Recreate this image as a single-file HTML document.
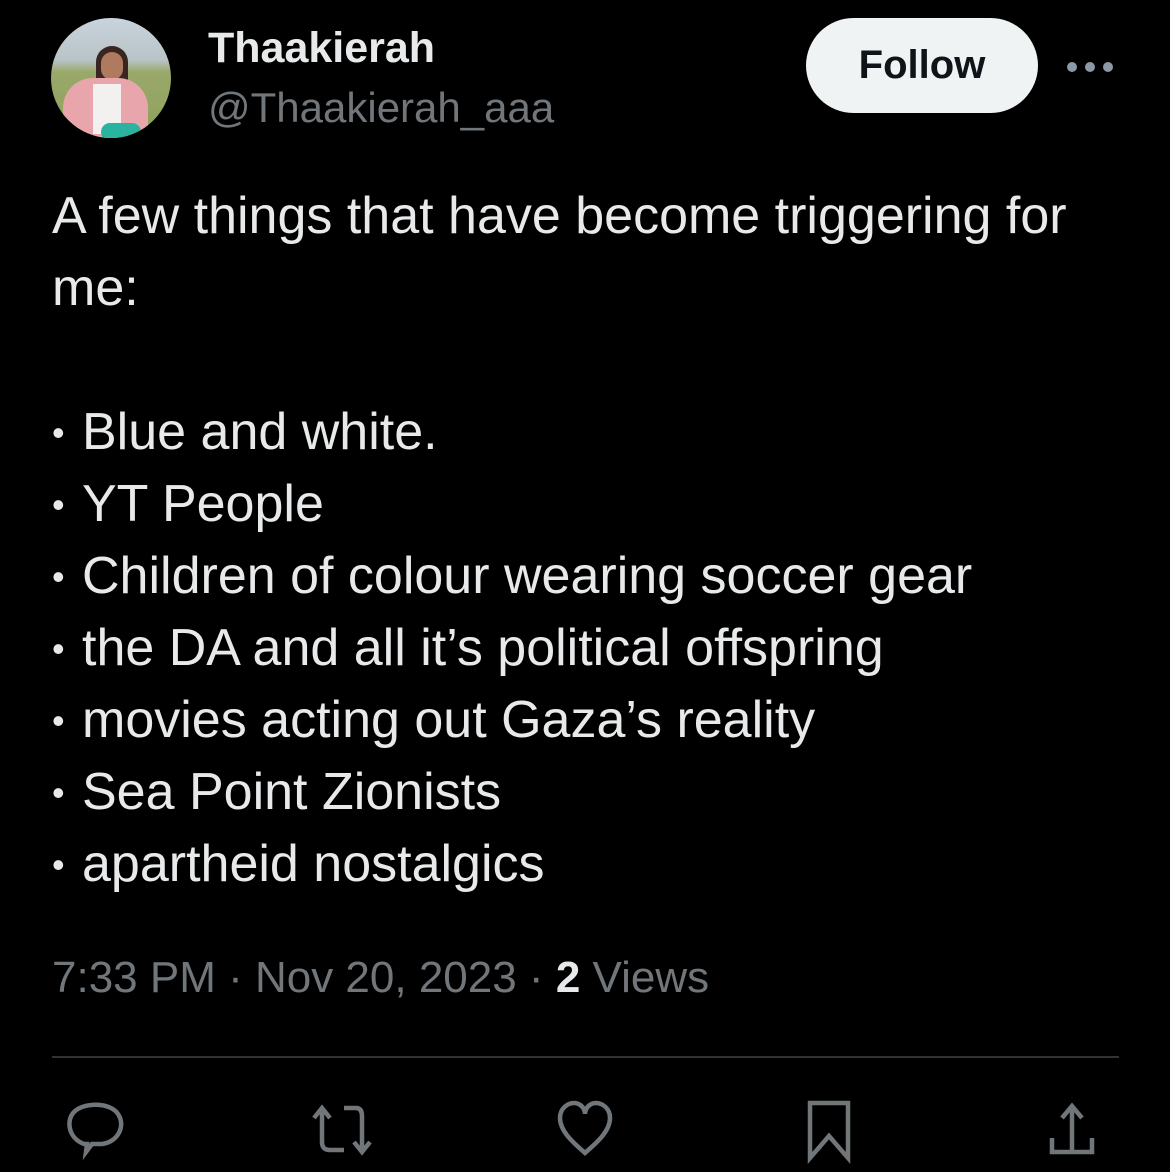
<!DOCTYPE html>
<html><head><style>
body{margin:0;width:1170px;height:1172px;background:#000;overflow:hidden;font-family:"Liberation Sans",sans-serif;color:#e7e9ea;position:relative}
.a{position:absolute;white-space:nowrap}
.av{left:51px;top:18px;width:120px;height:120px;border-radius:50%;background:linear-gradient(#c9d3dc 0%,#b9c4c8 35%,#9aa86a 45%,#8da35a 100%);overflow:hidden}
.body{left:52px;font-size:52px;line-height:72px}
.l{height:72px}
.b{display:inline-block;width:30px;font-size:36px;line-height:10px;vertical-align:4px}
.g{color:#71767b}
</style></head><body>
<div class="a av">
<div style="position:absolute;left:45px;top:28px;width:32px;height:50px;background:#3a2620;border-radius:16px 16px 6px 6px"></div>
<div style="position:absolute;left:50px;top:34px;width:22px;height:28px;background:#b07a5e;border-radius:11px"></div>
<div style="position:absolute;left:12px;top:60px;width:85px;height:60px;background:#e8a6ac;border-radius:30px 30px 0 0"></div>
<div style="position:absolute;left:42px;top:66px;width:28px;height:50px;background:#f3f0f0"></div>
<div style="position:absolute;left:50px;top:105px;width:40px;height:18px;background:#2bb3a0;border-radius:10px"></div>
</div>
<div class="a" style="left:208px;top:24px;font-size:43px;font-weight:bold">Thaakierah</div>
<div class="a g" style="left:208px;top:84px;font-size:42px">@Thaakierah_aaa</div>
<div class="a" style="left:806px;top:18px;width:232px;height:95px;border-radius:48px;background:#eff3f4;color:#0f1419;font-size:40px;font-weight:bold;text-align:center;line-height:95px">Follow</div>
<svg class="a" style="left:1066px;top:60px" width="48" height="14" fill="#8b98a5"><circle cx="6" cy="7" r="5"/><circle cx="24" cy="7" r="5"/><circle cx="42" cy="7" r="5"/></svg>
<div class="a body" style="top:180px">A few things that have become triggering for<br>me:</div>
<div class="a body" style="top:396px">
<div class="l"><span class="b">•</span>Blue and white.</div>
<div class="l"><span class="b">•</span>YT People</div>
<div class="l"><span class="b">•</span>Children of colour wearing soccer gear</div>
<div class="l"><span class="b">•</span>the DA and all it’s political offspring</div>
<div class="l"><span class="b">•</span>movies acting out Gaza’s reality</div>
<div class="l"><span class="b">•</span>Sea Point Zionists</div>
<div class="l"><span class="b">•</span>apartheid nostalgics</div>
</div>
<div class="a g" style="left:52px;top:953px;font-size:44px">7:33 PM · Nov 20, 2023 · <b style="color:#e7e9ea">2</b> Views</div>
<div class="a" style="left:52px;top:1056px;width:1067px;height:2px;background:#2f3336"></div>
<svg class="a" style="left:0;top:1080px" width="1170" height="92" fill="none" stroke="#71767b" stroke-width="4.5">
<path d="M84 64 C68 58 66 40 74 32 C84 22 110 22 118 34 C126 46 118 62 102 64 L92 64 L86 72 L87 64Z"/>
<path d="M322 32 L322 62 Q322 70 330 70 L344 70 M314 38 L322 28 L330 38 M344 28 L356 28 Q362 28 362 36 L362 68 M354 62 L362 72 L370 62"/>
<path d="M585 73 C575 64 560 52 560 38 C560 28 568 23 574 23 C580 23 585 28 585 34 C585 28 590 23 596 23 C602 23 610 28 610 38 C610 52 595 64 585 73Z"/>
<path d="M810 23 L848 23 L848 78 L829 56 L810 78Z"/>
<path d="M1072 70 L1072 26 M1062 38 L1072 26 L1082 38 M1052 58 L1052 72 L1092 72 L1092 58"/>
</svg>
</body></html>
